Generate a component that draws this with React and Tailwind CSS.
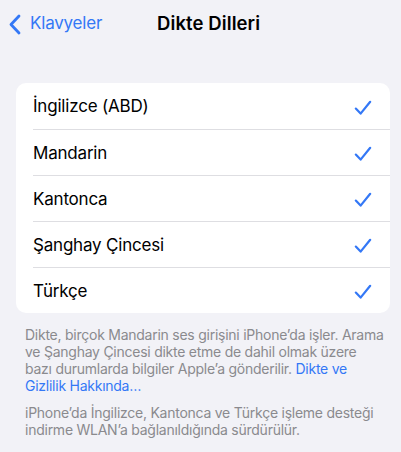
const languages = ['İngilizce (ABD)', 'Mandarin', 'Kantonca', 'Şanghay Çincesi', 'Türkçe']

function Check() {
  return (
    <svg width="18" height="16" viewBox="0 0 18 16" fill="none" className="mt-[3px]">
      <path d="M1.8 8.6 L6.6 13.6 L16.2 1.8" stroke="#3478F6" strokeWidth="2.2" strokeLinecap="round" strokeLinejoin="round" />
    </svg>
  )
}

export default function App() {
  return (
    <div className="min-h-[452px] w-[401px] bg-[#f2f2f7] font-['Inter','Liberation_Sans',sans-serif] antialiased">
      {/* Nav bar */}
      <div className="relative flex h-[46px] items-center pt-[2px]">
        <button className="flex items-center gap-[9px] pl-[9px] text-[#3478f6]">
          <svg width="12" height="21" viewBox="0 0 12 21" fill="none">
            <path d="M10 2 L2 10.5 L10 19" stroke="#3478F6" strokeWidth="2.8" strokeLinecap="round" strokeLinejoin="round" />
          </svg>
          <span className="text-[17px] tracking-[-0.2px]">Klavyeler</span>
        </button>
        <h1 className="absolute left-[157px] text-[18.5px] font-semibold tracking-[0.1px] text-black">Dikte Dilleri</h1>
      </div>

      {/* List */}
      <div className="ml-[16px] mr-[11px] mt-[37px] overflow-hidden rounded-[10px] bg-white">
        {languages.map((name, i) => (
          <div key={name} className="flex h-[46px] items-center pl-[17px]">
            <div className={`flex h-full flex-1 items-center pr-[18px] ${i > 0 ? 'border-t border-[#dedee2]' : ''}`}>
              <span className="flex-1 pt-[2px] text-[17px] tracking-[-0.2px] text-black">{name}</span>
              <Check />
            </div>
          </div>
        ))}
      </div>

      {/* Footer */}
      <div className="pl-[25px] pr-[15px] pt-[13px] text-[14px] leading-[17px] tracking-[-0.25px] text-[#8a8a8e]">
        <p>
          Dikte, birçok Mandarin ses girişini iPhone’da işler. Arama ve Şanghay Çincesi dikte etme de dahil olmak üzere bazı durumlarda bilgiler Apple’a gönderilir.{' '}
          <span className="text-[#3478f6]">Dikte ve Gizlilik Hakkında…</span>
        </p>
        <p className="mt-[10px]">
          iPhone’da İngilizce, Kantonca ve Türkçe işleme desteği indirme WLAN’a bağlanıldığında sürdürülür.
        </p>
      </div>
    </div>
  )
}
